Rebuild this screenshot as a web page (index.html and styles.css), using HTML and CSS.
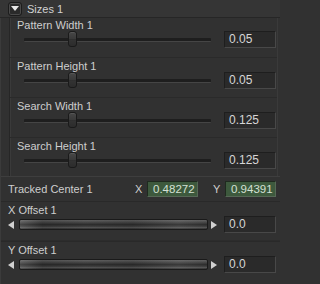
FILE: index.html
```html
<!DOCTYPE html>
<html>
<head>
<meta charset="utf-8">
<link rel="stylesheet" href="styles.css">
</head>
<body>
<div class="panel">
  <div class="header">
    <span class="toggle"><svg width="8" height="5" viewBox="0 0 8 5"><polygon points="0,0 8,0 4,5" fill="#e8e8e8"/></svg></span>
    <span class="title">Sizes 1</span>
  </div>
  <div class="body">
    <div class="section">
      <div class="srow">
        <div class="label">Pattern Width 1</div>
        <div class="ctrl">
          <div class="track"><div class="thumb" style="left:44px"></div></div>
          <div class="num">0.05</div>
        </div>
      </div>
      <div class="srow">
        <div class="label">Pattern Height 1</div>
        <div class="ctrl">
          <div class="track"><div class="thumb" style="left:44px"></div></div>
          <div class="num">0.05</div>
        </div>
      </div>
      <div class="srow">
        <div class="label">Search Width 1</div>
        <div class="ctrl">
          <div class="track"><div class="thumb" style="left:44px"></div></div>
          <div class="num">0.125</div>
        </div>
      </div>
      <div class="srow">
        <div class="label">Search Height 1</div>
        <div class="ctrl">
          <div class="track"><div class="thumb" style="left:44px"></div></div>
          <div class="num">0.125</div>
        </div>
      </div>
    </div>
    <div class="tcrow">
      <span class="tclabel">Tracked Center 1</span>
      <span class="axis">X</span>
      <span class="gnum">0.48272</span>
      <span class="axis axis-y">Y</span>
      <span class="gnum">0.94391</span>
    </div>
    <div class="orow">
      <div class="olabel">X Offset 1</div>
      <div class="octrl">
        <svg class="arrow" width="6" height="8" viewBox="0 0 6 8"><polygon points="6,0 6,8 0,4" fill="#d0d0d0"/></svg>
        <div class="jog"></div>
        <svg class="arrow arrow-r" width="6" height="8" viewBox="0 0 6 8"><polygon points="0,0 0,8 6,4" fill="#d0d0d0"/></svg>
        <div class="num">0.0</div>
      </div>
    </div>
    <div class="orow">
      <div class="olabel">Y Offset 1</div>
      <div class="octrl">
        <svg class="arrow" width="6" height="8" viewBox="0 0 6 8"><polygon points="6,0 6,8 0,4" fill="#d0d0d0"/></svg>
        <div class="jog"></div>
        <svg class="arrow arrow-r" width="6" height="8" viewBox="0 0 6 8"><polygon points="0,0 0,8 6,4" fill="#d0d0d0"/></svg>
        <div class="num">0.0</div>
      </div>
    </div>
  </div>
</div>
</body>
</html>
```
FILE: styles.css
```css
html, body {
  margin: 0;
  padding: 0;
  background: #313131;
}
.panel {
  width: 280px;
  height: 284px;
  overflow: hidden;
  background: #313131;
  font-family: "Liberation Sans", Arial, sans-serif;
  font-size: 11px;
  color: #cecece;
}
.header {
  height: 18px;
  box-sizing: border-box;
  display: flex;
  align-items: center;
  padding-left: 8px;
  background: #353535;
  border-bottom: 1px solid #262626;
}
.toggle {
  width: 14px;
  height: 14px;
  box-sizing: border-box;
  border: 1px solid #1c1c1c;
  box-shadow: inset 0 0 0 1px #4a4a4a;
  border-radius: 3px;
  background: #2a2a2a;
  display: flex;
  align-items: center;
  justify-content: center;
}
.title {
  margin-left: 5px;
  line-height: 12px;
  color: #d2d2d2;
}
.body {
  border-left: 1px solid #3b3b3b;
  height: 266px;
}
.section {
  margin-left: 8px;
  margin-right: 2px;
  border-left: 1px solid #262626;
  border-right: 1px solid #3a3a3a;
  box-shadow: inset 1px 0 #3a3a3a;
}
.srow {
  height: 39px;
  box-sizing: border-box;
  padding-top: 1px;
}
.srow + .srow {
  border-top: 1px solid #2a2a2a;
  height: 40px;
  padding-top: 2px;
}
.srow:last-child {
  height: 39px;
}
.label {
  line-height: 12px;
  height: 12px;
  padding-left: 7px;
}
.ctrl {
  display: flex;
  align-items: center;
  height: 17px;
  padding-left: 14px;
  padding-right: 1px;
}
.track {
  position: relative;
  flex: 1;
  height: 3px;
  background: #1e1e1e;
  border-bottom: 1px solid #454545;
  border-radius: 1px;
  margin-right: 13px;
}
.thumb {
  position: absolute;
  top: -7px;
  width: 9px;
  height: 16px;
  box-sizing: border-box;
  border: 1px solid #1a1a1a;
  border-radius: 3px;
  background: linear-gradient(#474747, #3a3a3a 47%, #262626 50%, #333 55%, #2c2c2c);
  box-shadow: inset 0 1px 0 #555;
}
.num {
  width: 52px;
  height: 17px;
  box-sizing: border-box;
  background: #2a2a2a;
  border: 1px solid #1e1e1e;
  border-right-color: #484848;
  border-bottom-color: #484848;
  padding-left: 4px;
  line-height: 15px;
  font-size: 12px;
  color: #d6d6d6;
}
.tcrow {
  height: 26px;
  box-sizing: border-box;
  border-top: 1px solid #3e3e3e;
  border-bottom: 1px solid #292929;
  display: flex;
  align-items: center;
  padding: 0 4px 0 7px;
}
.tclabel {
  flex: 1;
  line-height: 12px;
}
.axis {
  width: 7px;
  margin-right: 5px;
  line-height: 12px;
}
.axis-y {
  margin-left: 15px;
}
.gnum {
  width: 51px;
  height: 16px;
  box-sizing: border-box;
  background: #3d593d;
  border: 1px solid #1f2a1f;
  border-right-color: #566856;
  border-bottom-color: #566856;
  padding-left: 5px;
  line-height: 14px;
  font-size: 11.5px;
  color: #d4e0d4;
}
.orow {
  height: 40px;
  box-sizing: border-box;
  padding-top: 2px;
  border-bottom: 1px solid #292929;
  box-shadow: inset 0 -1px 0 #2c2c2c;
}
.orow:last-child {
  border-bottom: none;
  box-shadow: none;
}
.olabel {
  line-height: 12px;
  height: 12px;
  padding-left: 7px;
}
.octrl {
  display: flex;
  align-items: center;
  height: 17px;
  padding-left: 7px;
  padding-right: 4px;
}
.arrow {
  flex: none;
}
.jog {
  width: 189px;
  height: 11px;
  margin-left: 5px;
  box-sizing: border-box;
  border: 1px solid #1a1a1a;
  border-radius: 2px;
  background:
    linear-gradient(90deg, rgba(255,255,255,0.12) 0%, rgba(0,0,0,0.15) 12%, rgba(0,0,0,0.02) 35%, rgba(0,0,0,0.12) 60%, rgba(255,255,255,0.06) 85%, rgba(0,0,0,0.02) 100%),
    linear-gradient(#636363 0%, #4e4e4e 20%, #2e2e2e 50%, #3c3c3c 70%, #585858 85%, #2a2a2a 100%);
}
.arrow-r {
  margin-left: 3px;
  margin-right: 7px;
}
```
